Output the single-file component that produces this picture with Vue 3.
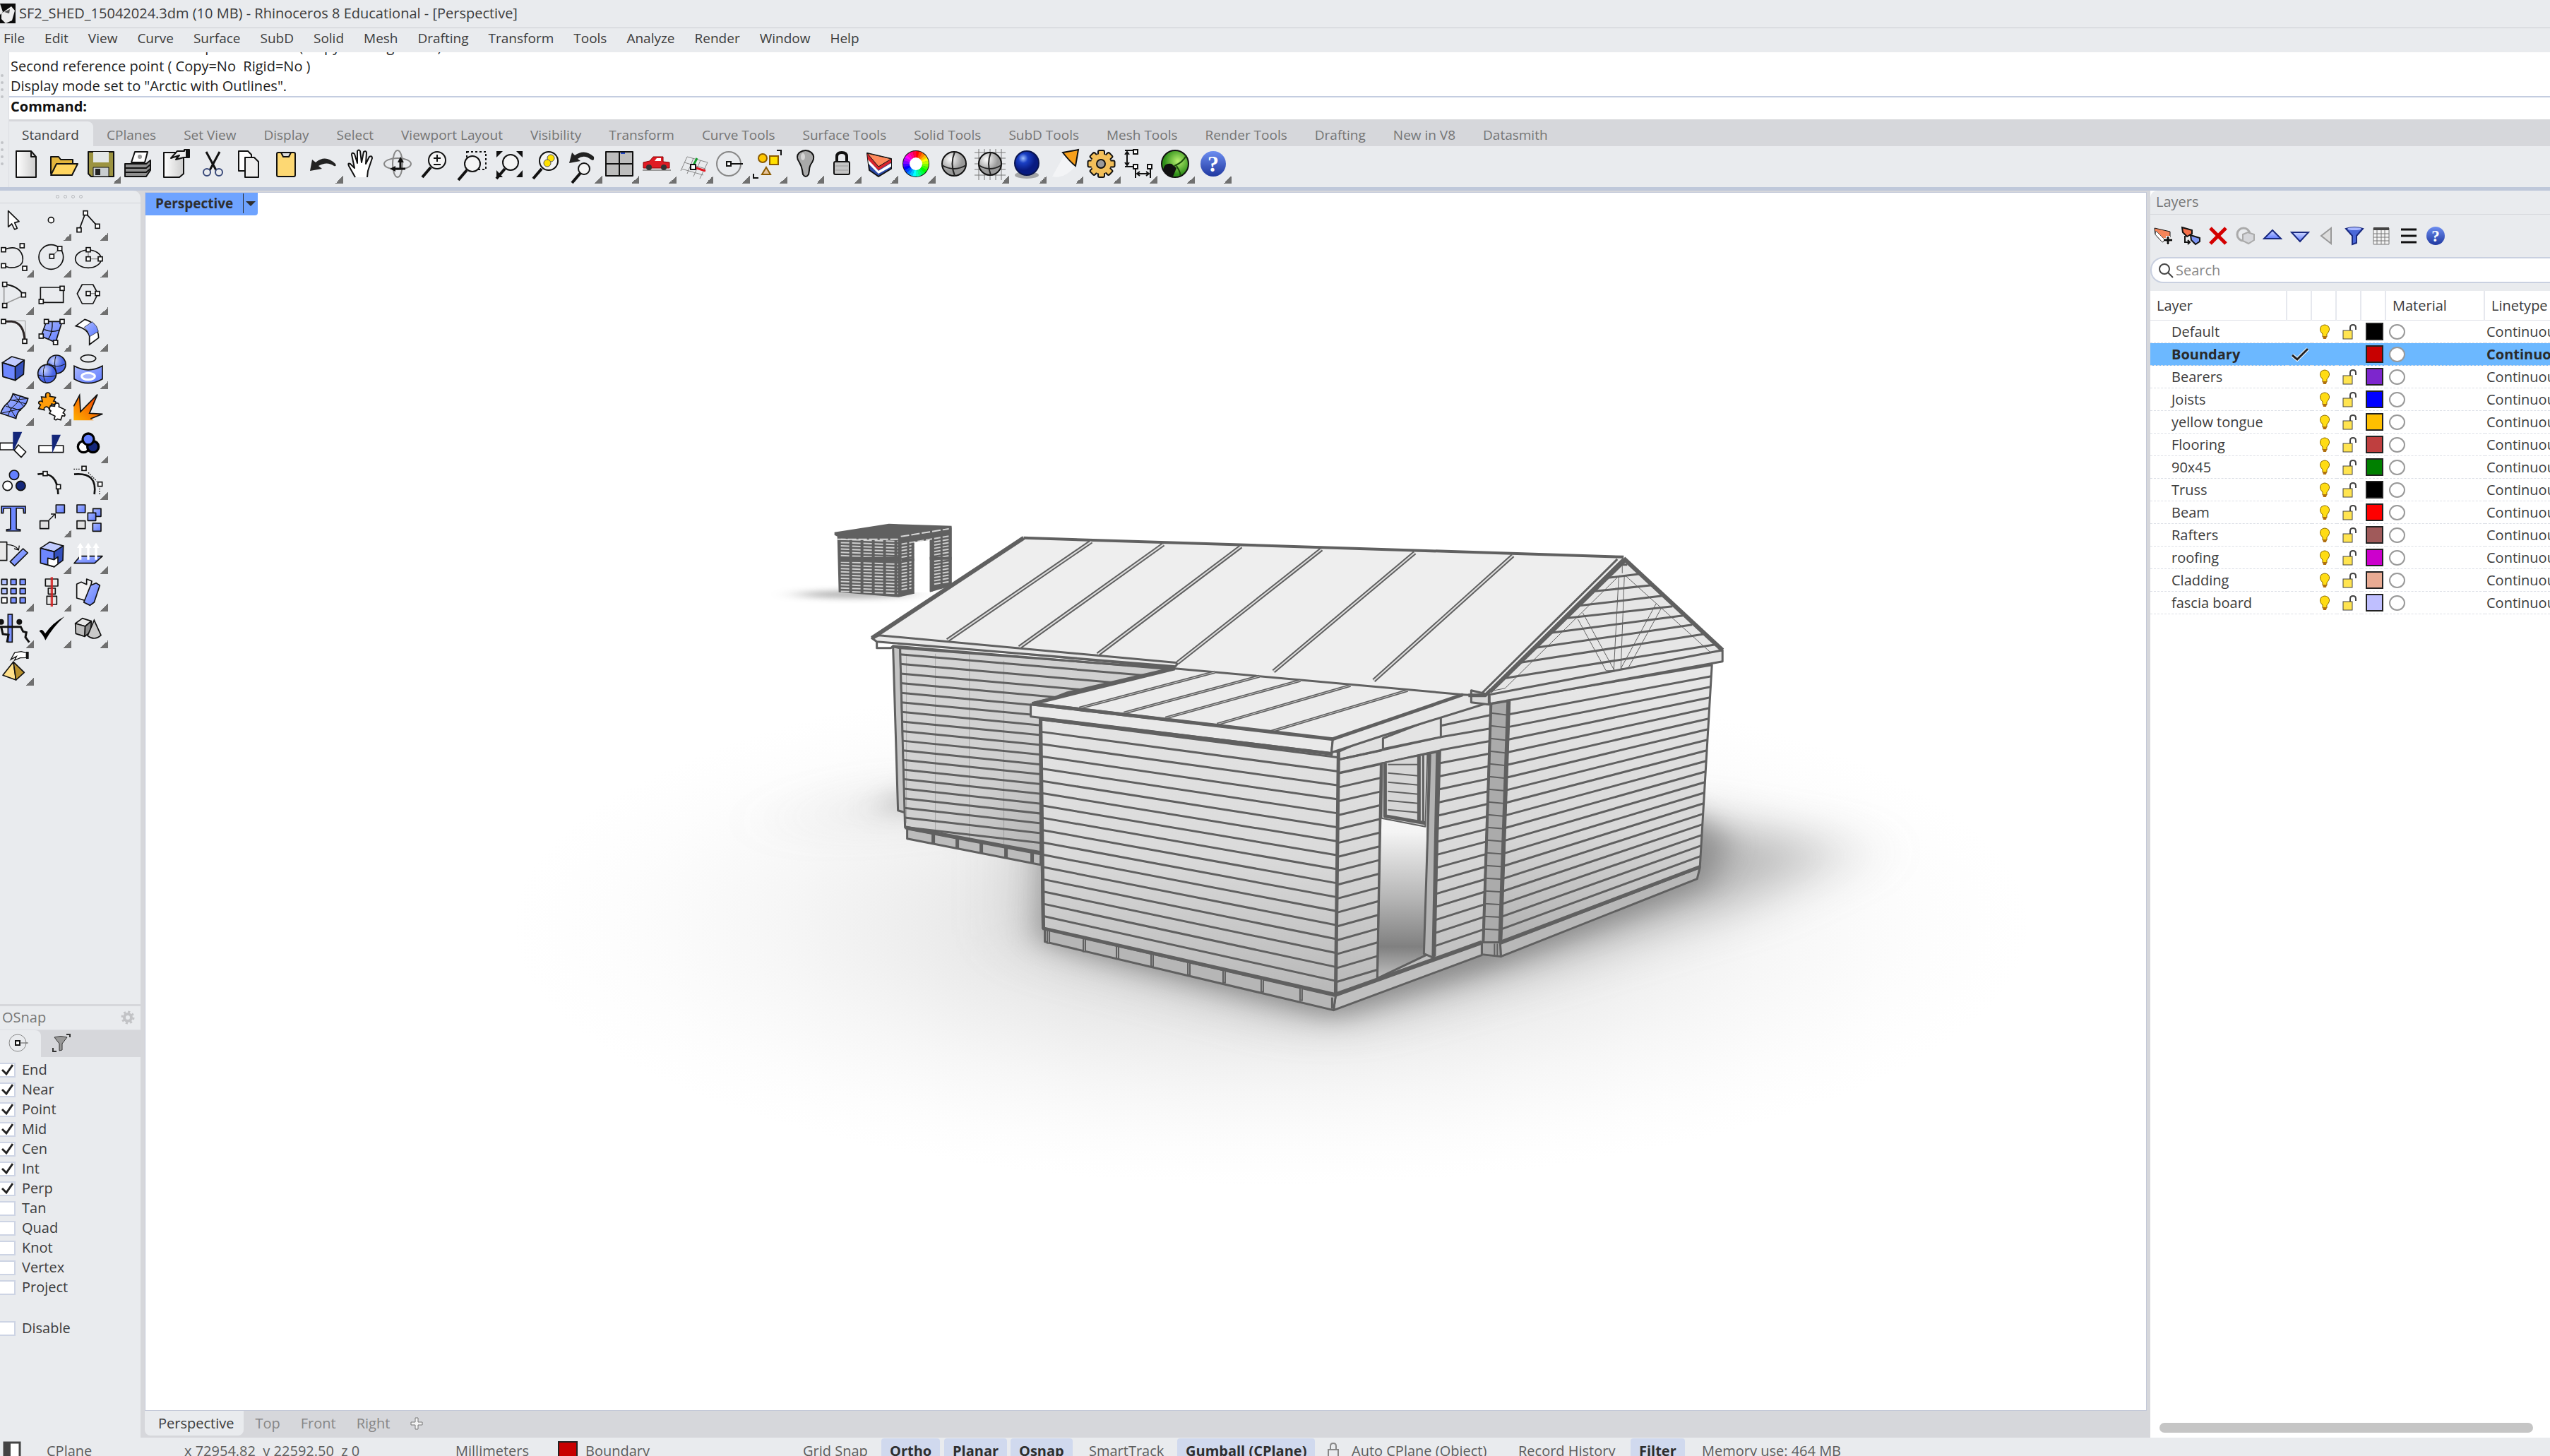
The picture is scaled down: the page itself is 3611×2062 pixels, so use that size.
<script setup>
import { ref } from 'vue'

const menus = ['File', 'Edit', 'View', 'Curve', 'Surface', 'SubD', 'Solid', 'Mesh', 'Drafting', 'Transform', 'Tools', 'Analyze', 'Render', 'Window', 'Help']
const tabs = ['Standard', 'CPlanes', 'Set View', 'Display', 'Select', 'Viewport Layout', 'Visibility', 'Transform', 'Curve Tools', 'Surface Tools', 'Solid Tools', 'SubD Tools', 'Mesh Tools', 'Render Tools', 'Drafting', 'New in V8', 'Datasmith']
const views = ['Perspective', 'Top', 'Front', 'Right']

const snaps = ref([
  ...['End', 'Near', 'Point', 'Mid', 'Cen', 'Int', 'Perp'].map((name) => ({ name, on: true })),
  ...['Tan', 'Quad', 'Knot', 'Vertex', 'Project', 'Disable'].map((name) => ({ name, on: false })),
])

const layers = [
  ['Default', '#000000'], ['Boundary', '#c80000'], ['Bearers', '#7d26cd'], ['Joists', '#0000ff'],
  ['yellow tongue', '#ffbf00'], ['Flooring', '#bf3f3f'], ['90x45', '#008000'], ['Truss', '#000000'],
  ['Beam', '#ff0000'], ['Rafters', '#a05a5a'], ['roofing', '#cc00cc'], ['Cladding', '#e9ab93'],
  ['fascia board', '#bfbfff'],
].map(([name, color]) => ({ name, color, current: name === 'Boundary' }))

// ---- helpers for icon markup -------------------------------------------
const k = 'stroke="#111" stroke-linejoin="round"'
const handles = (...pts) => pts.map(([x, y]) => `<rect x="${x - 9}" y="${y - 9}" width="18" height="18" fill="#fff" stroke="#111" stroke-width="5"/>`).join('')
const box = (x, y, w, h, fill) => `<rect x="${x}" y="${y}" width="${w}" height="${h}" fill="${fill}" ${k} stroke-width="5"/>`
const poly = (pts, fill, w = 5) => `<polygon points="${pts}" fill="${fill}" ${k} stroke-width="${w}"/>`
const line = (d, w = 5, c = '#111') => `<path d="${d}" fill="none" stroke="${c}" stroke-width="${w}"/>`
const lens = (x, y, r) => `<path d="M${x - r + 3} ${y + r - 2}L${x - r - 9} ${y + r + 12}" stroke="#111" stroke-width="4"/><circle cx="${x}" cy="${y}" r="${r}" fill="#f4f4f4" stroke="#111" stroke-width="2"/>`
const hueRing = Array.from({ length: 24 }, (_, i) => {
  const p = (a) => `${(25 + 13 * Math.sin(a)).toFixed(2)} ${(24 - 13 * Math.cos(a)).toFixed(2)}`
  return `<path d="M${p((i * Math.PI) / 12)}A13 13 0 0 1 ${p(((i + 1.1) * Math.PI) / 12)}" fill="none" stroke="hsl(${i * 15} 100% 50%)" stroke-width="10"/>`
}).join('')
const gearTeeth = Array.from({ length: 8 }, (_, i) => `<rect x="21" y="5" width="9" height="12" rx="2" transform="rotate(${i * 45} 25.500 24)" fill="#f2bf5a" stroke="#111" stroke-width="2"/>`).join('')
const cageLines = [8, 16, 24, 32, 40].map((n) => `M3 ${n}H47M${n + 1} 3V47`).join('')
const hand = '<path d="M17 43L8 27Q6 22 10 24L16 30L12 11Q12 7 16 10L20 23L20 6Q22 3 24 6L26 22L29 7Q32 5 33 8L32 24L37 14Q41 12 41 16L35 34L34 43" fill="#fff" stroke="#111" stroke-width="2" stroke-linejoin="round"/>'
const undo = '<path d="M6 34L9 18L14 22Q28 10 42 24Q44 28 40 27Q30 20 18 27L23 31Z" fill="#222"/>'

// ---- main toolbar: 52 x 52 artwork --------------------------------------
const toolbar = [
  ['New', `<path d="M9 6H30L37 14V43H9Z" fill="url(#page)" ${k} stroke-width="2"/><path d="M30 6V14H37" fill="none" ${k} stroke-width="2"/>`],
  ['Open', `<path d="M6 38V14H17L20 18H37V24" fill="#e3b53c" ${k} stroke-width="2"/><path d="M6 40L14 24H44L36 40Z" fill="#ffd560" ${k} stroke-width="2"/>`],
  ['Save', `<path d="M6 7H42V42H10L6 38Z" fill="#9c9340" ${k} stroke-width="2"/><rect x="13" y="7" width="22" height="15" fill="#e4e8e8"/><rect x="13" y="29" width="22" height="13" fill="#c9cdd0" ${k}/><rect x="16" y="31" width="7" height="9" fill="#222"/>`, 1],
  ['Print', `<path d="M15 22L20 7H38L34 22Z" fill="#fff" ${k} stroke-width="2"/><path d="M6 24H36L42 19V33L36 42H6Z" fill="#8f8f8f" ${k} stroke-width="2"/><path d="M6 30H36L42 25M6 36H36L42 31" fill="none" stroke="#111" stroke-width="2"/><circle cx="27" cy="14" r="3" fill="#999"/>`],
  ['Document properties', `<path d="M8 8H36V38L30 43H8Z" fill="url(#page)" ${k} stroke-width="2"/><path d="M18 16L27 6H37V4H44V15H36L25 18L30 12Z" fill="#eee" ${k} stroke-width="2"/><rect x="39" y="4" width="6" height="11" fill="#111"/>`],
  ['Cut', '<path d="M16 7L30 33M35 7L21 33" stroke="#111" stroke-width="3"/><circle cx="17" cy="36" r="5" fill="none" stroke="#3a4a7a" stroke-width="2"/><circle cx="34" cy="36" r="5" fill="none" stroke="#3a4a7a" stroke-width="2"/>'],
  ['Copy', `<path d="M9 6H22L27 11V34H9Z" fill="#fff" ${k} stroke-width="2"/><path d="M18 15H31L37 21V43H18Z" fill="#eee" ${k} stroke-width="2"/>`],
  ['Paste', `<rect x="11" y="8" width="26" height="34" rx="2" fill="#fdd873" ${k} stroke-width="2"/><path d="M17 8H31L28 14H20Z" fill="#ddd" ${k} stroke-width="2"/>`],
  ['Undo', undo, 1],
  ['Pan', hand],
  ['Rotate view', '<ellipse cx="25" cy="24" rx="7" ry="19" fill="none" stroke="#888" stroke-width="2"/><ellipse cx="25" cy="24" rx="19" ry="8" fill="none" stroke="#888" stroke-width="2"/><path d="M29 32V20M18 31H36" stroke="#111" stroke-width="3"/><path d="M29 14L25 22H34ZM14 31L22 27V35Z" fill="#111"/>'],
  ['Zoom dynamic', lens(28, 19, 12) + '<path d="M28 11V21M23 16H33M23 25H33" stroke="#111" stroke-width="2"/>'],
  ['Zoom window', '<rect x="18" y="7" width="27" height="25" fill="none" stroke="#111" stroke-width="2" stroke-dasharray="3 3"/>' + lens(26, 24, 11)],
  ['Zoom extents', '<path d="M7 6H16L7 15ZM35 6H44V15ZM7 33V43H16ZM44 33V43H35Z" fill="#111"/>' + lens(27, 22, 11)],
  ['Zoom selected', lens(29, 20, 13) + '<circle cx="32" cy="16" r="5" fill="#ffe100" stroke="#555"/><circle cx="27" cy="23" r="5" fill="#ffe100" stroke="#555"/>'],
  ['Undo view', '<path d="M6 23L10 8L14 12Q28 2 41 14Q42 21 37 18Q27 10 18 17L22 20Z" fill="#222"/>' + lens(27, 31, 8), 1],
  ['Four viewports', `<rect x="5" y="7" width="38" height="34" fill="#bdbdbd" ${k} stroke-width="2"/><path d="M24 7V41M5 24H43" stroke="#111" stroke-width="2"/><rect x="26" y="8" width="6" height="2" fill="#2346c4"/>`, 1],
  ['Named views', '<rect x="5" y="32" width="40" height="2" fill="#999"/><path d="M6 29V22L15 20L20 14H34V21L43 22L43 30H6Z" fill="#e01b24" stroke="#8b0000" stroke-width="1"/><path d="M22 20L25 16H31V20Z" fill="#fff"/><circle cx="14" cy="29" r="4" fill="#333"/><circle cx="35" cy="29" r="4" fill="#333"/>', 1],
  ['Set CPlane', '<path d="M15 14L44 22M11 22L41 31M7 31L38 40M15 14L6 34M24 16L15 38M34 19L24 42M44 22L33 45" stroke="#888" stroke-width="1"/><path d="M23 28L29 16" stroke="#14a02c" stroke-width="3"/><path d="M25 29L41 34" stroke="#e01b24" stroke-width="3"/><rect x="20" y="25" width="7" height="7" fill="#fff" stroke="#111" stroke-width="2"/>', 1],
  ['Object snap', '<circle cx="22" cy="24" r="17" fill="none" stroke="#888" stroke-width="2"/><rect x="19" y="21" width="6" height="6" fill="#fff" stroke="#111" stroke-width="2"/><path d="M25 24H42" stroke="#111" stroke-width="2"/>', 1],
  ['Select', `<circle cx="18" cy="16" r="6" fill="#ffc800" stroke="#8a5a00" stroke-width="2"/><rect x="28" y="13" width="12" height="12" fill="#ffe000" stroke="#8a5a00" stroke-width="2"/><path d="M23 29L29 39H17Z" fill="#e8c49a" stroke="#8a5a00" stroke-width="2"/><path d="M38 5H44V12M5 38V44H12" fill="none" stroke="#111" stroke-width="2"/>`, 1],
  ['Lights', `<path d="M21 33Q20 27 17 22Q11 14 17 8Q26 2 34 8Q40 14 35 22Q31 27 31 33L30 39Q26 45 22 39Z" fill="#a9a9a9" ${k} stroke-width="2"/><ellipse cx="22" cy="14" rx="3" ry="5" fill="#fff" opacity=".5"/>`, 1],
  ['Lock', `<path d="M18 22V14Q18 8 25 8Q32 8 32 14V22" fill="none" stroke="#111" stroke-width="4"/><rect x="14" y="21" width="22" height="18" rx="2" fill="#c4c4c4" ${k} stroke-width="2"/><path d="M16 27H34M16 33H34" stroke="#999" stroke-width="1"/>`, 1],
  ['Layers', `<path d="M8 9L42 17L42 31L24 42L11 33Z" fill="#2b4aa8" ${k} stroke-width="2"/><path d="M9 17L24 34L42 23V28L24 38L10 24Z" fill="#fff"/><path d="M8 9L24 28V33L9 18ZM24 28L42 17V22L24 33Z" fill="#d8232a"/><path d="M8 9L42 17L24 28Z" fill="#ff8a5c" ${k} stroke-width="1"/>`, 1],
  ['Colour', '<circle cx="25" cy="24" r="19" fill="#111"/>' + hueRing + '<circle cx="25" cy="24" r="9" fill="#fff"/>', 1],
  ['Shaded', '<circle cx="26" cy="24" r="17" fill="url(#grayBall)" stroke="#111" stroke-width="2"/><path d="M27 7Q20 24 27 41M9 26Q26 36 43 26" fill="none" stroke="#222" stroke-width="2"/>'],
  ['Shade selected', `<path d="${cageLines}" stroke="#777" stroke-width="1"/><circle cx="25" cy="24" r="16" fill="url(#grayBall)" stroke="#111" stroke-width="2"/><path d="M26 8Q20 24 26 40M9 26Q25 36 41 26" fill="none" stroke="#222" stroke-width="2"/>`, 1],
  ['Render', '<ellipse cx="25" cy="40" rx="17" ry="5" fill="#777" opacity=".6"/><circle cx="25" cy="23" r="17" fill="url(#navyBall)" stroke="#0a1550" stroke-width="2"/>', 1],
  ['Spotlight', '<path d="M26 10L42 26Q26 46 8 42Z" fill="#f3f4f6"/><path d="M23 8L45 4L41 27Q34 22 23 8Z" fill="#f7a01c" stroke="#111" stroke-width="2"/>', 1],
  ['Options', gearTeeth + '<circle cx="25" cy="24" r="14" fill="#f2bf5a"/><circle cx="25" cy="24" r="6" fill="#9a9a9a" stroke="#111" stroke-width="2"/>', 1],
  ['Dimension', '<path d="M6 5H20M6 28H20M9 8V25M21 31V44M42 31V44M24 38H39M6 11L9 7L12 11M6 22L9 26L12 22M27 35L23 38L27 41M36 35L40 38L36 41" fill="none" stroke="#111" stroke-width="2"/><rect x="18" y="4" width="6" height="6" fill="#fff" stroke="#111" stroke-width="2"/><rect x="18" y="25" width="6" height="6" fill="#fff" stroke="#111" stroke-width="2"/><rect x="38" y="25" width="6" height="6" fill="#fff" stroke="#111" stroke-width="2"/>', 1],
  ['Grasshopper', '<circle cx="25" cy="24" r="19" fill="url(#greenBall)" stroke="#111" stroke-width="2"/><path d="M8 32Q10 22 20 24L27 30L22 42Q12 42 8 32Z" fill="#111"/><path d="M24 27Q36 22 41 12M27 27Q34 38 32 41" fill="none" stroke="#1b4d0a" stroke-width="2"/>', 1],
  ['Help', '<circle cx="26" cy="24" r="18" fill="url(#helpBall)"/><text x="26" y="35" text-anchor="middle" font-family="Liberation Serif, serif" font-weight="700" font-size="32" fill="#fff">?</text>', 1],
]

// ---- side palette: artwork at three units per pixel ----------------------
const paletteLeft = [-12, 147, 303]
const paletteTop = [89, 248, 404, 558, 719, 877, 12, 168, 329, 487, 643, 799, 958]
const B = 'url(#blue)'
const palette = [
  ['Select', poly('35,118 35,186 50,173 62,197 73,192 62,168 81,163', '#fff')],
  ['Point', '<circle cx="217" cy="157" r="12" fill="#fff" stroke="#111" stroke-width="5"/>', 1],
  ['Polyline', line('M336 199L363 127L414 183') + handles([336, 199], [363, 127], [414, 183]), 1],
  ['Curve', line('M15 286Q60 268 82 288Q104 312 94 342Q80 364 40 362L15 354') + handles([15, 286], [94, 269], [15, 354], [105, 365]), 1],
  ['Circle', '<circle cx="217" cy="317" r="52" fill="none" stroke="#111" stroke-width="5"/>' + line('M220 314L254 281', 4, '#888') + handles([220, 314], [254, 281]), 1],
  ['Ellipse', '<ellipse cx="375" cy="325" rx="55" ry="38" fill="none" stroke="#111" stroke-width="5"/>' + line('M375 286V325H426', 4, '#888') + handles([375, 286], [375, 325], [426, 325]), 1],
  ['Arc', line('M17 435V515L98 478', 5, '#999') + line('M20 430Q72 434 100 475', 6) + handles([20, 430], [100, 475], [20, 520]), 1],
  ['Rectangle', line('M172 443H269V507H172Z') + handles([264, 447], [175, 503]), 1],
  ['Polygon', poly('349,431 395,431 416,470 395,512 349,512 328,470', 'none') + line('M375 469H414', 4, '#888') + handles([375, 469], [414, 469]), 1],
  ['Fillet', line('M20 583H108V665', 3, '#999') + line('M15 586H50Q103 592 105 670', 9, '#2b2424') + handles([15, 586], [105, 670]), 1],
  ['Surface from points', poly('197,586 264,586 236,675 175,648', B) + line('M222 586Q225 630 205 662M188 620Q220 635 252 622', 4) + handles([197, 586], [264, 586], [175, 648], [236, 675]), 1],
  ['Blend surface', '<path d="M322 605L360 577Q416 592 419 655L380 684V648Q370 615 322 605Z" fill="#fff" stroke="#111" stroke-width="5"/><path d="M358 610L392 587Q414 605 418 628L381 650Q374 624 358 610Z" fill="url(#blue)" stroke="#111" stroke-width="2"/>', 1],
  ['Box', poly('10,763 50,737 103,752 65,780', '#c0cbff') + poly('10,763 65,780 65,838 12,822', '#6d87ff') + poly('65,780 103,752 100,812 65,838', '#3450bd'), 1],
  ['Spheres', '<circle cx="240" cy="770" r="39" fill="url(#blueBall)" stroke="#111" stroke-width="5"/><circle cx="200" cy="810" r="39" fill="url(#blueBall)" stroke="#111" stroke-width="5"/>' + line('M238 732Q226 765 240 808M205 765Q240 790 278 768M190 775Q176 810 194 848M162 815Q200 828 238 818', 3), 1],
  ['Project', '<ellipse cx="375" cy="745" rx="32" ry="15" fill="none" stroke="#111" stroke-width="5"/><path d="M315 777Q375 810 435 777V832Q375 868 315 832Z" fill="url(#blue)" stroke="#111" stroke-width="5"/><ellipse cx="375" cy="821" rx="28" ry="14" fill="#a9b8ff" stroke="#fff" stroke-width="9"/>', 1],
  ['Mesh', '<path d="M55 897L119 917Q112 945 92 960Q72 975 68 1002L3 980Q10 955 30 938Q48 922 55 897Z" fill="url(#blue)" stroke="#111" stroke-width="5"/>' + line('M86 906Q78 935 60 948Q40 965 35 990M44 922L112 940M25 950L90 968M55 897L100 950M30 938L68 1000M119 917L48 925M92 960L3 980', 3), 1],
  ['Join', '<path d="M176 910L195 912Q190 892 204 892Q216 894 212 908L236 912L228 928Q240 928 236 938Q232 946 220 940L210 965Q206 952 196 952Q184 956 188 966L164 960L172 944Q160 938 166 930Q174 926 180 930Z" fill="#ff9d0a" stroke="#111" stroke-width="5"/><path d="M214 948L232 950Q232 938 242 936Q254 938 250 952L277 965L268 978Q280 984 274 992L264 990L258 1008L244 1004Q236 1012 230 1004L234 992L210 980L216 970Q206 964 214 948Z" fill="#fff" stroke="#111" stroke-width="5"/>', 1],
  ['Explode', '<path d="M313 1010V950L338 903L342 973L414 900L380 980L436 983L385 1003L398 1010Z" fill="url(#fire)"/>' + line('M313 950L338 903L342 973L414 900L380 980L436 983L385 1003', 5)],
  ['Trim', box(0, 82, 58, 29, '#fff') + poly('78,90 110,120 90,143 60,113', '#fff') + '<path d="M55 35H94L60 110H55Z" fill="#14277a"/>'],
  ['Split', box(165, 93, 104, 29, '#fff') + '<path d="M220 47H258L222 125Z" fill="#14277a"/>'],
  ['Group', '<g stroke="#000" stroke-width="10"><circle cx="355" cy="98" r="24" fill="#fff"/><circle cx="395" cy="98" r="24" fill="#14277a"/><circle cx="375" cy="66" r="24" fill="#6480ff"/></g>', 1],
  ['Ungroup', '<g stroke="#111" stroke-width="5"><circle cx="32" cy="264" r="20" fill="#fff"/><circle cx="88" cy="264" r="20" fill="#14277a"/><circle cx="60" cy="218" r="20" fill="#6480ff"/></g>'],
  ['Edit points', line('M160 215Q245 200 247 300', 8) + handles([192, 212], [248, 268])],
  ['Control points', line('M315 215Q415 205 401 300', 8) + '<path d="M313 193H340M375 208L412 245M423 275V303" stroke="#111" stroke-width="4" stroke-dasharray="5 5"/>' + handles([357, 190], [425, 257]), 1],
  ['Text', '<text x="57" y="458" text-anchor="middle" font-family="Liberation Serif, serif" font-weight="700" font-size="160" fill="#6d87ff" stroke="#111" stroke-width="5">T</text>'],
  ['Move', box(170, 415, 37, 33, '#e0e0e0') + box(238, 347, 36, 34, B) + line('M207 413L234 386M216 386H235V405', 4), 1],
  ['Copy objects', box(327, 347, 35, 33, B) + box(395, 363, 34, 33, B) + box(373, 381, 34, 33, B) + box(327, 415, 35, 33, '#e0e0e0') + box(394, 425, 35, 34, B)],
  ['Rotate', box(-5, 507, 34, 78, '#e8e8e8') + poly('98,535 118,553 62,608 43,590', B) + line('M30 518Q65 518 78 540M60 535L79 541L82 522', 4)],
  ['Solid tools', poly('172,533 211,507 269,523 230,548', '#c0cbff') + poly('172,533 230,548 230,612 172,596', '#6d87ff') + poly('230,548 269,523 267,585 230,612', '#3450bd') + poly('203,575 230,582 246,570 246,600 230,612 203,604', '#fff'), 1],
  ['Extrude', poly('340,567 435,567 402,597 315,597', B) + '<path d="M341 582V525M375 582V525M408 582V525" stroke="#fff" stroke-width="10"/><path d="M341 510L355 532H327ZM375 510L389 532H361ZM408 510L422 532H394Z" fill="#fff"/>', 1],
  ['Array', [0, 1, 2].map((r) => [0, 1, 2].map((c) => box(7 + 39 * c, 662 + 39 * r, 23, 23, r === 2 && c === 0 ? '#fff' : c === 0 ? '#b4c2ff' : '#7c93ff')).join('')).join(''), 1],
  ['Align', box(193, 661, 53, 30, '#e8e8e8') + box(205, 700, 30, 25, '#e8e8e8') + box(199, 734, 42, 35, '#e8e8e8') + '<rect x="215" y="653" width="10" height="125" fill="#d42020" opacity=".85"/>', 1],
  ['Shear', poly('326,683 345,674 368,684 368,661 390,670 372,755 326,742', '#f2f2f2') + poly('385,688 408,678 424,688 400,760 382,773 356,760', B), 1],
  ['Bend', '<rect x="34" y="811" width="18" height="118" fill="#7c93ff" stroke="#111" stroke-width="5"/><circle cx="5" cy="843" r="12" fill="#111"/><circle cx="82" cy="843" r="12" fill="#111"/>' + line('M0 864H88L98 884L112 888L108 908L124 930M5 864L12 895L36 898L30 930', 9), 1],
  ['Check', '<path d="M167 882Q178 868 192 893Q222 848 274 820Q225 865 193 921Q183 897 167 882Z" fill="#000"/>', 1],
  ['Solids', poly('320,850 350,828 388,840 362,862', '#e8e8e8') + poly('320,850 362,862 360,905 322,893', '#bdbdbd') + poly('362,862 388,840 385,885 360,905', '#8b8b8b') + '<path d="M400 836L429 900Q402 925 372 902Z" fill="#c9c9c9" stroke="#111" stroke-width="5"/>', 1],
  ['Gumball', '<path d="M46 1003L62 974L90 969L112 975V995L86 996L62 1006L70 990Z" fill="#fff" stroke="#111" stroke-width="4"/><rect x="111" y="970" width="11" height="30" fill="#111"/>' + poly('57,1013 12,1070 68,1090', '#ffe08a') + poly('57,1013 68,1090 103,1058', '#b8902c'), 1],
].map(([name, art, menu], i) => ({ name, art, menu, vb: `${paletteLeft[i % 3]} ${paletteTop[Math.floor(i / 3)]} 156 156` }))

// ---- layer panel toolbar: 28 x 28 artwork --------------------------------
const layerTools = [
  ['New layer', '<path d="M1 3L23 8V16L12 23L2 12Z" fill="#f5855a" stroke="#111"/><path d="M2 12L12 23L16 20L3 7Z" fill="#fff" stroke="#555"/><path d="M20 14V27M14 20H26" stroke="#fff" stroke-width="6"/><path d="M20 15V26M14 20H26" stroke="#111" stroke-width="3"/>'],
  ['New sublayer', '<path d="M1 2L15 6V11L8 15L2 9Z" fill="#f5704a" stroke="#111" stroke-width="2"/><path d="M13 13L26 17V22L20 26L14 20Z" fill="#7d96f5" stroke="#111" stroke-width="2"/><path d="M5 14V23H12M9 20L12 23L9 26" fill="none" stroke="#111" stroke-width="2"/>'],
  ['Delete', '<path d="M3 3L25 25M25 3L3 25" stroke="#d40000" stroke-width="5"/>'],
  ['Duplicate', '<circle cx="11" cy="12" r="9" fill="none" stroke="#aaa" stroke-width="3"/><path d="M10 12L17 9L26 12V20L18 25L10 21Z" fill="#d6d7db" stroke="#aaa" stroke-width="2"/>'],
  ['Up', '<path d="M2 18L14 6L26 18Z" fill="url(#blueUp)" stroke="#1a2a80" stroke-width="2"/>'],
  ['Down', '<path d="M2 9L14 22L26 9Z" fill="url(#blueUp)" stroke="#1a2a80" stroke-width="2"/>'],
  ['Out', '<path d="M20 3V25L6 14Z" fill="#ddd" stroke="#999" stroke-width="2"/>'],
  ['Filter', '<path d="M2 4Q14 0 26 4L17 14V24L11 26V14Z" fill="#4a68d8" stroke="#1a2a80" stroke-width="2"/><ellipse cx="14" cy="4" rx="10" ry="2" fill="#a9b8ff"/>'],
  ['Columns', '<path d="M3 3H25V26H3ZM3 11H25M3 16H25M3 21H25M8 6V26M14 6V26M19 6V26" fill="#f4f4f4" stroke="#777"/><rect x="3" y="2" width="22" height="4" fill="#444"/>'],
  ['Menu', '<path d="M3 5H25M3 14H25M3 23H25" stroke="#111" stroke-width="3"/>'],
  ['Help', '<circle cx="14" cy="14" r="13" fill="url(#helpBall)"/><text x="14" y="22" text-anchor="middle" font-family="Liberation Serif, serif" font-weight="700" font-size="23" fill="#fff">?</text>'],
]

// ---- model: evenly spaced boards between two edges -----------------------
const boards = (n, x1, y1, s1, x2, y2, s2, d1 = 0, d2 = 0) =>
  Array.from({ length: n }, (_, i) => `M${x1 + d1 * i} ${y1 + s1 * i}L${x2 + d2 * i} ${y2 + s2 * i}`).join('')
const rearBoards = boards(19, 1275, 926, 13.6, 1660, 959, 14.2, 0.4)
const frontBoards = boards(17, 1473, 1018, 17.4, 1896, 1072, 19.8, 0.2, -0.2)
const returnBoards = boards(17, 1896, 1075, 19.7, 1957, 1062, 19.4, -0.2, -0.3)
const porchBoards = boards(17, 2041, 1043, 18.5, 2111, 1031, 17.8, -0.5, -0.6)
const cornerBoards = boards(18, 2112, 1009, 18, 2136, 1012, 17.9, -0.6, -0.6)
const gableWallBoards = boards(18, 2137, 1011, 17.9, 2424, 957, 15, -0.6, -0.9)
const hutFront = boards(17, 1191, 763, 4.6, 1272, 766, 4.6)
const hutSide = boards(15, 1276, 770, 4.6, 1347, 758, 4.6)
const roofSeams = [[1546, 766, 1342, 906], [1648, 770, 1444, 916], [1758, 773, 1555, 926], [1872, 777, 1668, 938], [2004, 782, 1804, 950], [2143, 786, 1946, 963]]
const porchSeams = [[1721, 951, 1529, 1002], [1784, 957, 1592, 1009], [1842, 963, 1651, 1016], [1913, 970, 1724, 1025], [1994, 977, 1801, 1035]]
const bearers = [[1485, 1316], [1536, 1328], [1583, 1338], [1632, 1349], [1684, 1361], [1734, 1372], [1788, 1385], [1843, 1397]]
</script>

<template>
  <div class="app">
    <svg class="defs" width="0" height="0" aria-hidden="true">
      <defs>
        <linearGradient id="page"><stop offset="0" stop-color="#fff" /><stop offset="1" stop-color="#ccc" /></linearGradient>
        <linearGradient id="blue" x1="0" y1="0" x2="1" y2="1"><stop offset="0" stop-color="#a9b8ff" /><stop offset="1" stop-color="#5f7bff" /></linearGradient>
        <linearGradient id="blueUp" x1="0" y1="0" x2="0" y2="1"><stop offset="0" stop-color="#d0d9ff" /><stop offset="1" stop-color="#5f7bff" /></linearGradient>
        <linearGradient id="fire" x1="0" y1="1" x2="1" y2="0"><stop offset="0" stop-color="#ffb000" /><stop offset="1" stop-color="#f03000" /></linearGradient>
        <radialGradient id="blueBall" cx=".35" cy=".3"><stop offset="0" stop-color="#c9d4ff" /><stop offset="1" stop-color="#4a66e8" /></radialGradient>
        <radialGradient id="grayBall" cx=".35" cy=".3"><stop offset="0" stop-color="#fff" /><stop offset="1" stop-color="#999" /></radialGradient>
        <radialGradient id="navyBall" cx=".35" cy=".3"><stop offset="0" stop-color="#9fc0ff" /><stop offset=".4" stop-color="#1a3fc4" /><stop offset="1" stop-color="#081a80" /></radialGradient>
        <radialGradient id="greenBall" cx=".6" cy=".4"><stop offset="0" stop-color="#b8f070" /><stop offset="1" stop-color="#2f8f18" /></radialGradient>
        <linearGradient id="helpBall" x1="0" y1="0" x2="0" y2="1"><stop offset="0" stop-color="#6c8df0" /><stop offset="1" stop-color="#2038a0" /></linearGradient>
      </defs>
    </svg>

    <header class="titlebar">
      <svg width="22" height="28" viewBox="0 0 22 28"><rect width="22" height="28" fill="#0c0c0c" /><path d="M0 0L4 12L0 16ZM2 14L16 4L21 10L17 24L8 28L2 22Z" fill="#eee" /><path d="M6 12L14 8L13 14Z" fill="#555" /></svg>
      <span>SF2_SHED_15042024.3dm (10 MB) - Rhinoceros 8 Educational - [Perspective]</span>
    </header>

    <nav class="menubar">
      <button v-for="m in menus" :key="m" type="button">{{ m }}</button>
    </nav>

    <section class="command">
      <div class="grip"><i v-for="n in 4" :key="n" /></div>
      <div class="command-body">
        <div class="history">
          <p>Scale factor or first reference point &lt;1.000&gt; ( Copy=No&nbsp; Rigid=No )</p>
          <p>Second reference point ( Copy=No&nbsp; Rigid=No )</p>
          <p>Display mode set to "Arctic with Outlines".</p>
        </div>
        <div class="prompt">
          <label for="cmd">Command:</label>
          <input id="cmd" type="text" />
        </div>
      </div>
    </section>

    <section class="ribbon">
      <div class="grip"><i v-for="n in 4" :key="n" /></div>
      <div class="ribbon-body">
        <div class="tabs" role="tablist">
          <button v-for="(t, i) in tabs" :key="t" type="button" role="tab" :class="{ active: i === 0 }">{{ t }}</button>
        </div>
        <div class="toolbar">
          <button v-for="[name, art, menu] in toolbar" :key="name" type="button" class="tool" :aria-label="name">
            <svg viewBox="0 0 52 52" v-html="art" />
            <i v-if="menu" class="corner" />
          </button>
        </div>
      </div>
    </section>

    <main class="workspace">
      <aside class="left">
        <div class="palette-grip"><i v-for="n in 4" :key="n" /></div>
        <div class="palette">
          <button v-for="p in palette" :key="p.name" type="button" class="tool" :aria-label="p.name">
            <svg :viewBox="p.vb" v-html="p.art" />
            <i v-if="p.menu" class="corner" />
          </button>
        </div>
        <div class="spacer" />
        <section class="osnap">
          <div class="osnap-title">
            <span>OSnap</span>
            <svg width="20" height="20" viewBox="0 0 20 20"><circle cx="10" cy="10" r="5" fill="none" stroke="#c2c3c6" stroke-width="4" /><circle cx="10" cy="10" r="8" fill="none" stroke="#c2c3c6" stroke-width="3" stroke-dasharray="3 3.280" /></svg>
          </div>
          <div class="osnap-tabs">
            <button type="button" class="active" aria-label="Snaps"><svg width="30" height="26" viewBox="0 0 30 26"><circle cx="14" cy="13" r="12" fill="none" stroke="#888" stroke-width="1" /><rect x="11" y="10" width="6" height="6" fill="#fff" stroke="#111" stroke-width="2" /><path d="M17 13H29" stroke="#555" stroke-width="1" /></svg></button>
            <button type="button" aria-label="Filter"><svg width="26" height="26" viewBox="0 0 26 26"><path d="M3 5Q12 2 21 5L14 14V23L10 24V14Z" fill="#999" stroke="#333" stroke-width="1" /><path d="M20 1H25V5M1 20V25H6" fill="none" stroke="#333" stroke-width="2" /></svg></button>
          </div>
          <div class="snap-list">
            <label v-for="s in snaps" :key="s.name" :class="{ apart: s.name === 'Disable' }">
              <input v-model="s.on" type="checkbox" />
              <svg v-if="s.on" class="tick" width="18" height="18" viewBox="0 0 18 18"><path d="M1 9L7 15L16 2" fill="none" stroke="#222" stroke-width="3" /></svg>
              <span>{{ s.name }}</span>
            </label>
          </div>
        </section>
      </aside>

      <section class="center">
        <div class="viewport">
          <svg class="scene" viewBox="206 272 2834 1725" preserveAspectRatio="xMidYMid meet">
            <defs>
              <radialGradient id="ground"><stop offset="0" stop-color="#808080" stop-opacity=".8" /><stop offset=".4" stop-color="#999" stop-opacity=".5" /><stop offset=".65" stop-color="#aaa" stop-opacity=".24" /><stop offset=".85" stop-color="#bbb" stop-opacity=".08" /><stop offset="1" stop-color="#ccc" stop-opacity="0" /></radialGradient>
              <filter id="soft" x="-30%" y="-80%" width="160%" height="260%"><feGaussianBlur stdDeviation="60 30" /></filter>
              <filter id="near" x="-30%" y="-80%" width="160%" height="260%"><feGaussianBlur stdDeviation="22 16" /></filter>
              <filter id="tiny" x="-30%" y="-200%" width="160%" height="500%"><feGaussianBlur stdDeviation="20 4" /></filter>
              <linearGradient id="wall" x1="0" y1="0" x2="0" y2="1"><stop offset="0" stop-color="#e4e4e4" /><stop offset=".5" stop-color="#dadada" /><stop offset="1" stop-color="#b8b8b8" /></linearGradient>
              <linearGradient id="rear" x1="0" y1="0" x2="1" y2="1"><stop offset="0" stop-color="#d6d6d6" /><stop offset=".5" stop-color="#cfcfcf" /><stop offset="1" stop-color="#9c9c9c" /></linearGradient>
              <linearGradient id="gable" x1="0" y1="0" x2="0" y2="1"><stop offset="0" stop-color="#e8e8e8" /><stop offset=".6" stop-color="#d8d8d8" /><stop offset="1" stop-color="#b0b0b0" /></linearGradient>
              <linearGradient id="floor" x1="0" y1="0" x2="0" y2="1"><stop offset="0" stop-color="#fff" /><stop offset=".35" stop-color="#f4f4f4" /><stop offset=".65" stop-color="#b4b4b4" /><stop offset=".86" stop-color="#808080" /><stop offset="1" stop-color="#c0c0c0" /></linearGradient>
              <clipPath id="rearClip"><polygon points="1275,917 1658,946 1512,980 1473,995 1474,1207 1282,1171" /></clipPath>
              <clipPath id="frontClip"><polygon points="1473,1016 1896,1064 1892,1408 1477,1314" /></clipPath>
              <clipPath id="porchClip"><polygon points="2041,1010 2112,990 2101,1334 2030,1356" /></clipPath>
            </defs>

            <ellipse cx="1800" cy="1310" rx="1080" ry="370" fill="url(#ground)" opacity=".42" />
            <polygon points="1080,1170 1300,1130 1480,1150 1480,1340 1880,1450 2130,1380 2460,1280 2620,1200 2400,1160 1700,1100" fill="#777" opacity=".5" filter="url(#soft)" />
            <polygon points="1230,1150 1290,1120 1480,1190 1470,1330 1890,1440 2130,1365 2420,1255 2450,1190 2400,1150 1700,1100" fill="#666" opacity=".5" filter="url(#near)" />
            <ellipse cx="1210" cy="841" rx="80" ry="5" fill="#888" opacity=".7" filter="url(#tiny)" />

            <!-- distant hut -->
            <path d="M1182 753L1259 741L1348 744V829L1317 838V766L1295 767V840L1273 845L1188 838L1186 759L1182 757Z" fill="#606060" />
            <path :d="hutFront" stroke="#cfcfcf" stroke-width="2" stroke-dasharray="12 4" />
            <path d="M1186 763H1272M1276 759L1345 748" stroke="#d8d8d8" stroke-width="2" stroke-dasharray="12 3" />
            <path :d="hutSide" stroke="#cfcfcf" stroke-width="2" stroke-dasharray="9 3" />
            <path d="M1295 767L1317 764V838H1295Z" fill="#fff" />
            <path d="M1188 790H1273M1188 793H1273M1277 792H1295M1317 790H1348" stroke="#606060" stroke-width="4" />
            <path d="M1275 760V844M1293 768V840M1319 765V837M1346 746V829" stroke="#606060" stroke-width="4" />

            <g fill="none" stroke="#606060" stroke-width="3" stroke-linejoin="round">
              <!-- rear wall -->
              <polygon points="1265,915 1275,917 1282,1150 1272,1147" fill="#c4c4c4" />
              <polygon points="1275,917 1658,946 1512,980 1473,995 1474,1207 1282,1171" fill="url(#rear)" />
              <path :d="rearBoards" clip-path="url(#rearClip)" />
              <polygon points="1285,1173 1474,1209 1474,1224 1285,1187" fill="#bcbcbc" />
              <path d="M1322 1180V1194M1356 1187V1201M1390 1193V1207M1425 1200V1214M1462 1207V1221" stroke-width="5" />
              <path d="M1282 1171L1474 1207" stroke-width="5" />
              <path d="M1325 925V1180M1373 925V1190M1422 935V1195M1284 925V1165" stroke-width="1" opacity=".35" />

              <!-- main roof -->
              <polygon points="1245,900 1450,761 2300,789 2108,980 2072,983 1664,946 1669,939" fill="#eee" stroke="none" />
              <path d="M1242 907V917H1262L1265 914L1658 947M1245 906L1665 945" />
              <polygon points="1235,903 1245,899 1669,938 1665,943 1242,908" fill="#e8e8e8" />
              <path d="M1235 903L1450 761" stroke-width="6" />
              <path d="M1450 761L2300 788" stroke-width="4" />
              <g v-for="s in roofSeams" :key="s[0]">
                <path :d="`M${s[0]} ${s[1]}L${s[2]} ${s[3]}`" stroke-width="6" />
                <path :d="`M${s[0]} ${s[1]}L${s[2]} ${s[3]}`" stroke="#dedede" stroke-width="2" />
              </g>

              <!-- lean-to roof -->
              <polygon points="1463,995 1664,946 2072,983 1888,1046" fill="#ececec" />
              <g v-for="s in porchSeams" :key="s[0]">
                <path :d="`M${s[0]} ${s[1]}L${s[2]} ${s[3]}`" stroke-width="4" />
                <path :d="`M${s[0]} ${s[1]}L${s[2]} ${s[3]}`" stroke="#c8c8c8" stroke-width="1" />
              </g>

              <!-- gable wall -->
              <polygon points="2137,990 2425,941 2408,1227 2125,1334" fill="url(#gable)" />
              <path :d="gableWallBoards" />
              <polygon points="2125,1336 2408,1228 2404,1244 2126,1354" fill="#b8b8b8" />
              <path d="M2125 1334L2408 1227M2137 990L2125 1334" stroke-width="5" />
              <polygon points="2300,791 2110,979 2110,983 2440,920" fill="#e6e6e6" stroke="none" />
              <path d="M2293 799H2305M2273 818L2323 812M2254 837L2340 828M2237 857L2355 843M2216 875L2369 858M2193 896L2384 871M2172 917L2397 884M2151 938L2415 897M2130 960L2430 912" />
              <path d="M2298 798V811M2293 816L2286 948M2301 814L2296 946M2235 876L2275 949H2287L2242 867M2346 854L2296 946L2306 946L2353 861M2294 814L2132 974L2112 978M2302 814L2424 924H2438" stroke-width="1" />
              <polygon points="2110,983 2440,920 2440,936 2110,996" fill="#e4e4e4" />
              <path d="M2300 790L2440 920" stroke-width="6" />
              <path d="M2291 791L2100 980M2300 790L2107 980" />
              <path d="M2303 792L2111 979" stroke-width="5" />

              <!-- porch return wall, door and corner -->
              <polygon points="1896,1064 2072,985 2112,996 2101,1334 1892,1408" fill="url(#wall)" />
              <path :d="porchBoards" clip-path="url(#porchClip)" />
              <path d="M2041 1027L2111 1012M1896 1075L2041 1043M1896 1094L2041 1062" />
              <polygon points="1956,1081 2024,1066 2020,1352 1951,1385" fill="url(#floor)" />
              <polygon points="1958,1080 2022,1067 2019,1170 1957,1158" fill="#d6d6d6" stroke-width="2" />
              <path d="M1966 1082H2009M1966 1094L2009 1098M1966 1107L2009 1111M1966 1120L2009 1124M1966 1133L2009 1137M1966 1146L2009 1150" stroke-width="2" />
              <path d="M1962 1080V1155L2019 1165M2010 1070V1163" stroke-width="5" />
              <path d="M2016 1068V1165" />
              <polygon points="2026,1066 2040,1063 2031,1356 2017,1350" fill="#b4b4b4" />
              <path d="M2037 1064L2031 1354" stroke-width="6" />
              <path :d="returnBoards" />
              <path d="M1957 1079L1951 1384" />
              <polygon points="1959,1045 2041,1013 2041,1043 1959,1060" fill="#e4e4e4" />
              <polygon points="2112,996 2137,992 2125,1334 2101,1334" fill="#ababab" />
              <path :d="cornerBoards" stroke-width="2" />
              <polygon points="2099,1334 2125,1334 2126,1354 2099,1351" fill="#a8a8a8" />
              <path d="M2112 996L2101 1334" stroke-width="4" />
              <path d="M2137 990L2125 1334" stroke-width="6" />
              <path d="M2117 1336V1353M2121 1336V1353" stroke-width="2" />
              <polygon points="1892,1408 2099,1334 2099,1352 1889,1430" fill="#c0c0c0" />
              <path d="M1892 1408L2099 1334" stroke-width="6" />

              <!-- front wall -->
              <polygon points="1473,1016 1896,1064 1892,1408 1477,1314" fill="url(#wall)" />
              <path :d="frontBoards" clip-path="url(#frontClip)" />
              <polygon points="1480,1315 1892,1410 1889,1430 1480,1333" fill="#b6b6b6" />
              <g v-for="b in bearers" :key="b[0]">
                <path :d="`M${b[0]} ${b[1]}V${b[1] + 20}`" stroke-width="5" />
                <path :d="`M${b[0]} ${b[1]}V${b[1] + 18}`" stroke="#aaa" stroke-width="1" />
              </g>
              <path d="M1477 1314L1892 1408M1474 1016L1478 1314M1896 1064L1892 1408" stroke-width="5" />
              <path d="M1887 1412V1428" />

              <!-- lean-to fascia -->
              <polygon points="1460,997 1888,1046 1886,1066 1460,1014" fill="#e9e9e9" />
              <polygon points="1888,1046 2072,983 2090,984 2110,994 1959,1041 1886,1065" fill="#e7e7e7" />
              <path d="M1462 996L1664 946M1462 996L1888 1046L2072 983" stroke-width="5" />
              <path d="M1473 1017L1888 1067" stroke-width="5" />
              <polygon points="2084,977 2109,983 2109,997 2084,994" fill="#d8d8d8" />
              <path d="M2080 984H2104L2112 976" stroke-width="5" />
            </g>
          </svg>
          <button type="button" class="view-label"><span>Perspective</span><i /></button>
        </div>
        <div class="view-tabs" role="tablist">
          <button v-for="(v, i) in views" :key="v" type="button" role="tab" :class="{ active: i === 0 }">{{ v }}</button>
          <button type="button" aria-label="Add viewport" class="add"><svg width="18" height="18" viewBox="0 0 18 18"><path d="M7 1H11V7H17V11H11V17H7V11H1V7H7Z" fill="#f4f4f4" stroke="#777" /></svg></button>
        </div>
      </section>

      <aside class="right">
        <h2>Layers</h2>
        <div class="layer-tools">
          <button v-for="[name, art] in layerTools" :key="name" type="button" :aria-label="name"><svg width="28" height="28" viewBox="0 0 28 28" v-html="art" /></button>
        </div>
        <div class="search">
          <svg width="22" height="22" viewBox="0 0 22 22"><circle cx="9" cy="9" r="7" fill="none" stroke="#444" stroke-width="2" /><path d="M14 14L21 21" stroke="#444" stroke-width="2" /></svg>
          <input type="search" placeholder="Search" aria-label="Search" />
        </div>
        <div class="table-wrap">
          <table>
            <colgroup><col class="c-name" /><col class="c-flag" /><col class="c-flag" /><col class="c-flag" /><col class="c-flag" /><col class="c-mat" /><col /></colgroup>
            <thead>
              <tr><th>Layer</th><th /><th /><th /><th /><th>Material</th><th>Linetype</th></tr>
            </thead>
            <tbody>
              <tr v-for="l in layers" :key="l.name" :class="{ current: l.current }">
                <td class="name">{{ l.name }}</td>
                <td><svg v-if="l.current" width="26" height="20" viewBox="0 0 26 20"><path d="M2 11L9 17L24 2" fill="none" stroke="#fff" stroke-width="5" /><path d="M2 11L9 17L24 2" fill="none" stroke="#222" stroke-width="3" /></svg></td>
                <td><svg v-if="!l.current" width="16" height="22" viewBox="0 0 16 22"><path d="M5 14Q-1 8 3 3Q8 -1 13 3Q17 8 11 14V18H5Z" fill="#ffdc14" stroke="#8a6a00" /><path d="M5 17H11L10 21H6Z" fill="#b07010" /></svg></td>
                <td><svg v-if="!l.current" width="20" height="22" viewBox="0 0 20 22"><path d="M11 9V5Q11 1 15 1Q19 1 19 5V8" fill="none" stroke="#444" stroke-width="2" /><rect x="1" y="9" width="13" height="12" fill="#ffe450" stroke="#444" /></svg></td>
                <td><span class="swatch" :style="{ background: l.color }" /></td>
                <td class="mat"><span class="ball" /></td>
                <td class="lt">Continuous</td>
              </tr>
            </tbody>
          </table>
        </div>
        <div class="scroll"><i /></div>
      </aside>
    </main>

    <footer class="status">
      <button type="button" class="side" aria-label="Toggle sidebar"><svg width="26" height="26" viewBox="0 0 26 26"><path d="M2 2H24V24H2Z" fill="#fff" stroke="#444" stroke-width="3" /><rect x="2" y="2" width="9" height="22" fill="#444" /></svg></button>
      <button type="button">CPlane</button>
      <span>x 72954.82&nbsp; y 22592.50&nbsp; z 0</span>
      <button type="button">Millimeters</button>
      <button type="button" class="cur"><i />Boundary</button>
      <button type="button">Grid Snap</button>
      <button type="button" class="on">Ortho</button>
      <button type="button" class="on">Planar</button>
      <button type="button" class="on">Osnap</button>
      <button type="button" class="mid">SmartTrack</button>
      <button type="button" class="on">Gumball (CPlane)</button>
      <button type="button" class="auto"><svg width="16" height="24" viewBox="0 0 16 24"><path d="M4 10V5Q4 1 8 1Q12 1 12 5V10M1 10H15V23H1Z" fill="none" stroke="#888" stroke-width="2" /></svg>Auto CPlane (Object)</button>
      <button type="button">Record History</button>
      <button type="button" class="on">Filter</button>
      <span>Memory use: 464 MB</span>
    </footer>
  </div>
</template>

<style>
body { margin: 0; overflow: hidden; }
</style>

<style scoped>
.app { display: flex; flex-direction: column; height: 100vh; overflow: hidden; background: #e9ebee; color: #3c3c3c; font: 20px/28px "Open Sans", "Noto Sans", sans-serif; }
.app * { box-sizing: border-box; }
.defs { position: absolute; }
button { border: 0; padding: 0; margin: 0; background: none; color: inherit; font: inherit; white-space: nowrap; }
input { font: inherit; color: inherit; }
svg { display: block; flex: none; }

.titlebar { flex: none; display: flex; align-items: center; gap: 5px; height: 40px; padding-bottom: 1px; border-bottom: 1px solid #c9cbd0; white-space: nowrap; }
.menubar { flex: none; display: flex; align-items: center; gap: 28px; height: 34px; padding: 0 0 7px 5px; font-size: 19px; }

.grip { flex: none; width: 13px; display: flex; flex-direction: column; justify-content: center; gap: 6px; padding-left: 1px; border-right: 1px solid #dcdee3; }
.grip i { width: 4px; height: 4px; border-radius: 50%; background: #c2c4c8; }
.command { flex: none; display: flex; height: 95px; }
.command-body { flex: 1; min-width: 0; background: #fff; color: #1c1c1c; }
.history { display: flex; flex-direction: column; justify-content: flex-end; height: 62px; overflow: hidden; padding-left: 2px; }
.history p { flex: none; margin: 0; height: 28px; }
.prompt { display: flex; align-items: center; height: 33px; padding: 0 0 5px 2px; border-top: 2px solid #c4cde0; }
.prompt label { font-weight: 700; color: #111; }
.prompt input { flex: 1; height: 24px; border: 0; outline: 0; }

.ribbon { flex: none; display: flex; height: 96px; }
.ribbon-body { flex: 1; min-width: 0; }
.tabs { display: flex; height: 38px; padding-top: 3px; background: #d6d7db; color: #757575; font-size: 19px; }
.tabs button { padding: 3px 20px 0 19px; }
.tabs .active { padding-left: 18px; background: #e9ebee; color: #444; border-radius: 0 8px 0 0; }
.toolbar { display: grid; grid-template-columns: repeat(33, 1fr); width: 1731px; padding-left: 1px; }
.tool { position: relative; height: 52px; margin-top: 1px; }
.tool svg { width: 52px; height: 52px; overflow: visible; }
.corner { position: absolute; right: 0; bottom: 0; width: 11px; height: 11px; background: linear-gradient(135deg, transparent 50%, #707070 50%); }

.workspace { flex: 1; min-height: 0; display: grid; grid-template-columns: 199px 1fr 566px; background: #d6d7db; border-top: 5px solid #bfc8da; }
.left { display: flex; flex-direction: column; min-height: 0; background: #e9ebee; border-radius: 0 10px 0 0; }
.palette-grip { flex: none; display: flex; justify-content: center; gap: 6px; height: 18px; padding: 6px 4px 0 0; border-bottom: 1px solid #d3d5da; }
.palette-grip i { width: 5px; height: 5px; border-radius: 50%; border: 1px solid #b4b6ba; }
.palette { flex: none; display: grid; grid-template-columns: 48px 53px 52px; grid-auto-rows: 1fr; height: 683px; }
.palette .tool { display: flex; justify-content: flex-end; height: auto; margin: 0; align-items: flex-end; }
.palette .tool svg { overflow: hidden; }
.spacer { flex: 1; }

.osnap { flex: none; height: 614px; border-top: 3px solid #d6d7db; }
.osnap-title { display: flex; align-items: center; justify-content: space-between; height: 34px; padding: 0 8px 1px 3px; color: #777; border-bottom: 1px solid #dcdee3; }
.osnap-tabs { display: flex; height: 38px; background: #d6d7db; }
.osnap-tabs button { display: flex; align-items: center; justify-content: center; width: 58px; padding-bottom: 3px; }
.osnap-tabs .active { background: #e9ebee; border-radius: 0 8px 0 0; padding-right: 6px; }
.snap-list { display: flex; flex-direction: column; padding-top: 4px; }
.snap-list label { position: relative; display: flex; align-items: center; gap: 9px; height: 28px; }
.snap-list .apart { margin-top: 30px; }
.snap-list input { appearance: none; width: 22px; height: 21px; margin: 0; background: #fff; border: 2px solid #cdd4e4; border-left: 0; }
.tick { position: absolute; left: 2px; top: 5px; }

.center { display: flex; flex-direction: column; min-width: 0; padding: 2px 5px 0 6px; }
.viewport { flex: 1; min-height: 0; position: relative; background: #fff; border: 1px solid #c3c8d8; }
.scene { width: 100%; height: 100%; }
.view-label { position: absolute; left: 0; top: 0; display: flex; align-items: center; height: 32px; padding: 0 3px 2px 14px; background: #6ea3ff; color: #2e2e2e; font-size: 19px; font-weight: 700; border-radius: 0 0 4px 0; }
.view-label span { padding-right: 14px; line-height: 28px; border-right: 1px solid #2e2e2e; }
.view-label i { margin-left: 3px; border: 7px solid transparent; border-top-color: #2e2e2e; border-bottom: 0; }
.view-tabs { flex: none; display: flex; gap: 29px; height: 38px; color: #868686; padding-bottom: 3px; }
.view-tabs .active { margin-right: -13px; padding: 0 14px 0 19px; color: #3c3c3c; background: #e9ebee; border-radius: 0 0 8px 8px; }

.right { display: flex; flex-direction: column; min-width: 0; background: #fff; }
h2 { flex: none; margin: 0; height: 34px; padding-left: 8px; font-size: 20px; line-height: 32px; font-weight: 400; color: #777; background: #e9ebee; border-radius: 10px 0 0 0; border-bottom: 1px solid #d6d8dc; }
.layer-tools { flex: none; display: grid; grid-template-columns: repeat(11, 1fr); width: 100%; align-items: center; height: 60px; padding: 0 137px 0 5px; background: #e9ebee; }
.layer-tools button { width: 28px; }
.search { flex: none; display: flex; align-items: center; gap: 3px; height: 37px; padding-left: 9px; background: #fff; border: 2px solid #c9d0e0; border-right: 0; border-radius: 18px 0 0 18px; box-shadow: -20px 0 0 #e9ebee; clip-path: inset(0); }
.search input { flex: 1; min-width: 0; height: 30px; padding: 0; border: 0; outline: 0; background: none; }
.search input::placeholder { color: #888; opacity: 1; }
.table-wrap { flex: 1; min-height: 0; overflow: hidden; border-top: 11px solid #e9ebee; }
table { table-layout: fixed; width: 100%; border-spacing: 0; }
.c-name { width: 194px; }
.c-flag { width: 35px; }
.c-mat { width: 140px; }
th { height: 42px; padding: 0 0 0 9px; text-align: left; font-weight: 400; border-right: 2px solid #e6e8ee; border-bottom: 1px solid #dfe1e8; }
th:last-child { border-right: 0; white-space: nowrap; overflow: hidden; }
td { height: 32px; padding: 0; border-bottom: 1px dashed #dcdfe6; white-space: nowrap; overflow: hidden; line-height: 24px; }
td svg { margin: 0 auto; }
.name { padding-left: 30px; }
.lt { padding-left: 2px; }
.swatch { display: block; width: 25px; height: 25px; margin-left: 6px; border: 2px solid #222; }
.ball { display: block; width: 23px; height: 22px; margin-left: 4px; border: 2px solid #999; border-radius: 50%; background: #fff; }
.current td { background: #6cb8ff; font-weight: 700; color: #2a2a2a; }
.scroll { flex: none; height: 21px; padding: 0 24px 0 13px; }
.scroll i { display: block; height: 14px; border-radius: 7px; background: #c5c5c5; }

.status { flex: none; display: grid; grid-template-columns: 66px 195px 384px 145px 347px 111px 89px 94px 105px 131px 207px 276px 159px 101px 1fr; height: 26px; overflow: hidden; color: #5c5c5c; white-space: nowrap; padding-top: 1px; }
.status > * { height: 35px; line-height: 35px; text-align: left; }
.status .side { padding: 5px 0 0 4px; }
.status .side svg { margin-top: -6px; }
.status .on { justify-self: start; padding: 0 12px; background: #d0d9ee; color: #2e2e2e; font-weight: 700; border-radius: 4px 4px 0 0; }
.status .cur { display: flex; align-items: center; gap: 11px; }
.cur i { width: 28px; height: 28px; background: #c80000; border: 2px solid #222; }
.status .mid { padding-left: 6px; }
.status .auto { display: flex; align-items: center; gap: 18px; padding-left: 6px; }
</style>
